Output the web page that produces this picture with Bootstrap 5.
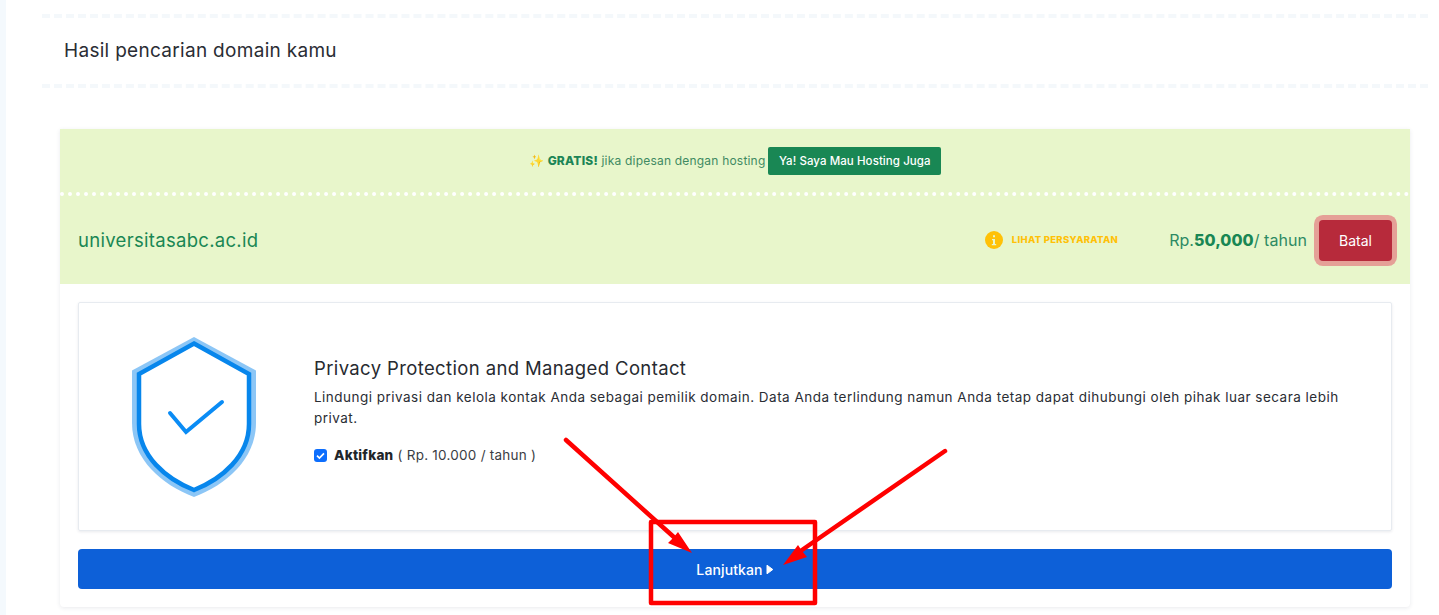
<!DOCTYPE html>
<html lang="id"><head><meta charset="utf-8">
<link href="https://cdn.jsdelivr.net/npm/bootstrap@5.3.0/dist/css/bootstrap.min.css" rel="stylesheet">
<style>
html,body{height:615px;overflow:hidden}
body{background:#fff;font-family:Inter,"Liberation Sans",sans-serif;color:#212529;position:relative}
.sidestrip{position:absolute;left:0;top:0;bottom:0;width:6px;background:#f4f9fd}
.mainpane{margin-left:42px;margin-right:11px;padding-top:14px}
.headrow{height:74px;border-top:4px dashed #f4f8fb;border-bottom:4px dashed #f4f8fb;padding-left:22px;font-size:19px;color:#2a2d34;letter-spacing:.3px}
.resultbox{margin:41px 18px 0 18px;height:478px;box-shadow:0 1px 4px rgba(40,50,80,.1);border-radius:0 0 4px 4px}
.promo{height:63px;background:#e8f6cb;border-bottom:4px dotted #fff;font-size:12px;letter-spacing:.2px;color:#3f8a62;gap:3px;box-sizing:content-box}
.promo b{font-weight:800;color:#1c8556}
.btn-hosting{background:#198754;color:#fff;font-size:11.5px;letter-spacing:.07px;font-weight:500;padding:0 10.5px;height:28px;line-height:26px;border-radius:2px;border:0}
.domainrow{height:88px;background:#e8f6cb;padding:0 18px 0 18px;color:#198754}
.domname{font-size:18.5px;letter-spacing:.3px;padding-top:2px}
.terms{font-size:9.5px;letter-spacing:.3px;font-weight:800;color:#ffc107;gap:9px;margin-right:51px}
.priceline{font-size:16px;letter-spacing:.05px;margin-right:12px;color:#2d8a63}
.priceline b{font-weight:800;color:#198754}
.btn-batal{background:#b72a3b;color:#fff;font-size:14px;font-weight:400;width:73px;height:41px;border:0;border-radius:4px;box-shadow:0 0 0 5px #e5a097;padding:0}
.bodyarea{padding:18px 18px 0;background:#fff;border-radius:0 0 4px 4px}
.privacybox{height:229px;border:1px solid #e7ebf0;box-shadow:0 1px 3px rgba(40,50,80,.1);border-radius:2px}
.shieldcell{width:235px;flex:none;padding-right:5px}
.contentcell{padding:0 24px 11px 0}
.ptitle{font-size:18.5px;line-height:22px;font-weight:400;margin:0 0 7.5px;color:#272a30;letter-spacing:.37px}
.pdesc{font-size:13.5px;letter-spacing:.48px;line-height:21px;margin:0 0 16.5px;color:#2a2d34}
.tick{width:13px;height:13px;border-radius:3px;background:#0d6efd;margin-right:7px}
.optline{font-size:13.5px;letter-spacing:.25px;line-height:20px;color:#3a3d44}
.optline b{font-weight:800;color:#212529}
.btn-next{display:flex;align-items:center;justify-content:center;gap:3px;background:#0d60d8;color:#fff;height:40px;width:100%;margin-top:18px;border:0;border-radius:4px;font-size:14px;letter-spacing:.12px;font-weight:500}
.overlaymark{position:absolute;left:0;top:0;width:1439px;height:615px;pointer-events:none}
</style></head><body>
<div class="sidestrip"></div>
<div class="mainpane">
  <div class="headrow d-flex align-items-center">Hasil pencarian domain kamu</div>
  <div class="resultbox">
    <div class="promo d-flex align-items-center justify-content-center">
      <span>✨ <b>GRATIS!</b> jika dipesan dengan hosting</span>
      <button class="btn btn-hosting">Ya! Saya Mau Hosting Juga</button>
    </div>
    <div class="domainrow d-flex align-items-center">
      <div class="domname me-auto">universitasabc.ac.id</div>
      <div class="terms d-flex align-items-center">
        <svg width="18" height="18" viewBox="0 0 18 18"><circle cx="9" cy="9" r="9" fill="#ffc107"/><path d="M7 8h3v5h1.2v1.2H6.8V13H8V9.2H7zM8 4.2h2v2H8z" fill="#e8f6cb"/></svg>
        <span>LIHAT PERSYARATAN</span>
      </div>
      <div class="priceline">Rp.<b>50,000</b>/ tahun</div>
      <button class="btn btn-batal">Batal</button>
    </div>
    <div class="bodyarea">
      <div class="privacybox d-flex align-items-center">
        <div class="shieldcell d-flex justify-content-center">
          <svg width="124" height="160" viewBox="132 336 124 160">
            <path d="M194 336 L256 369.5 V422 C256 458 226 484 194 496 C162 484 132 458 132 422 V369.5 Z" fill="#8cc6f6"/>
            <path d="M194 342.5 L249 373 V423 C249 455 222 478 194 489 C166 478 139 455 139 423 V373 Z" fill="#fff" stroke="#0786ec" stroke-width="4.5"/>
            <path d="M170 412 L186 431 L222 401" fill="none" stroke="#0a8cf5" stroke-width="4" stroke-linecap="round"/>
          </svg>
        </div>
        <div class="contentcell flex-grow-1">
          <h5 class="ptitle">Privacy Protection and Managed Contact</h5>
          <p class="pdesc">Lindungi privasi dan kelola kontak Anda sebagai pemilik domain. Data Anda terlindung namun Anda tetap dapat dihubungi oleh pihak luar secara lebih privat.</p>
          <div class="optline d-flex align-items-center">
            <svg class="tick" viewBox="0 0 13 13"><path d="M3 6.7l2.4 2.3L10 4.4" fill="none" stroke="#fff" stroke-width="1.7"/></svg>
            <span><b>Aktifkan</b> ( Rp. 10.000 / tahun )</span>
          </div>
        </div>
      </div>
      <button class="btn btn-next">Lanjutkan <svg width="8" height="11" viewBox="0 0 8 11"><path d="M1 1.2L6.8 5.5L1 9.8Z" fill="#fff" stroke="#fff" stroke-width="1" stroke-linejoin="round"/></svg></button>
    </div>
  </div>
</div>
<svg class="overlaymark" viewBox="0 0 1439 615">
  <rect x="651" y="522" width="164" height="81" fill="none" stroke="#f00" stroke-width="4.5" stroke-linejoin="round"/>
  <path d="M566 440 L676 539" stroke="#f00" stroke-width="4.5" stroke-linecap="round"/>
  <path d="M692 553 L668 543 L673 538 L678 532Z" fill="#f00"/>
  <path d="M945 451 L802 550" stroke="#f00" stroke-width="4.5" stroke-linecap="round"/>
  <path d="M783 565 L798 545 L802 551 L807 557Z" fill="#f00"/>
</svg>
</body></html>
